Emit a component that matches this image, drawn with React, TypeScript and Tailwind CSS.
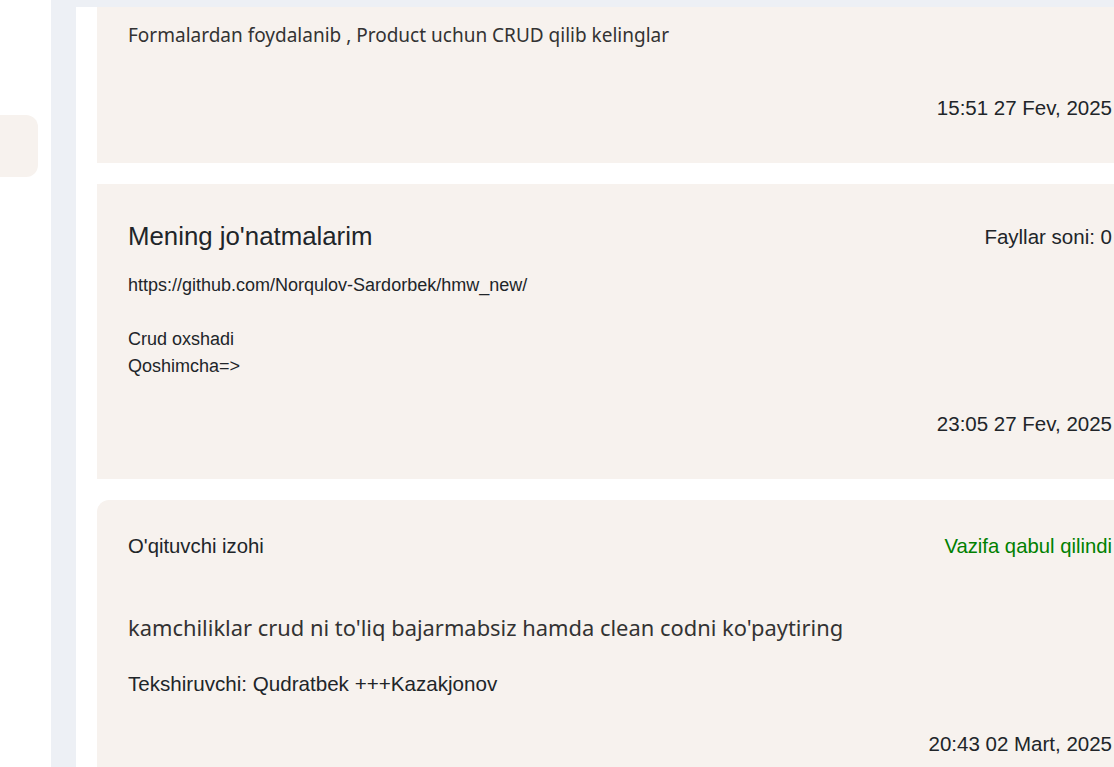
import React from 'react';

const ubuntuLike = { fontFamily: '"Noto Sans", "DejaVu Sans", sans-serif' };
const arial = { fontFamily: '"Liberation Sans", Arial, sans-serif' };

export default function App() {
  return (
    <div className="flex w-[1114px] h-[767px] overflow-hidden bg-white text-[#212529]" style={arial}>
      {/* sidebar (scrolled, only the active item edge shows) */}
      <aside className="w-[51px] shrink-0 bg-white pt-[115px]">
        <div className="w-[38px] h-[62px] rounded-r-xl bg-[#f7f2ee]" />
      </aside>

      {/* main area */}
      <div className="flex-1 shrink-0 bg-[#edf0f5] pl-[25px] pt-[7px]">
        <div className="w-[1067px] h-full bg-white pl-[21px] flex flex-col gap-[21px]">
          {/* task card */}
          <section className="bg-[#f7f2ee] pl-[31px] pr-[31px] pt-[16px] pb-[42px]">
            <p className="text-[19px] leading-[24px] text-[#333]" style={ubuntuLike}>
              Formalardan foydalanib , Product uchun CRUD qilib kelinglar
            </p>
            <div className="mt-[47px] text-right text-[20.5px] leading-[27px]">15:51 27 Fev, 2025</div>
          </section>

          {/* submission */}
          <section className="bg-[#f7f2ee] pl-[31px] pr-[31px] pt-[36px] pb-[42px]">
            <div className="flex items-center justify-between">
              <h2 className="text-[25.8px] leading-[32px]">Mening jo'natmalarim</h2>
              <span className="text-[20.5px] leading-[27px]">Fayllar soni: 0</span>
            </div>
            <p className="mt-[20px] text-[18px] leading-[27px] whitespace-pre-line">
              {'https://github.com/Norqulov-Sardorbek/hmw_new/\n\nCrud oxshadi\nQoshimcha=>'}
            </p>
            <div className="mt-[30px] text-right text-[20.5px] leading-[27px]">23:05 27 Fev, 2025</div>
          </section>

          {/* teacher comment */}
          <section className="bg-[#f7f2ee] rounded-tl-xl pl-[31px] pr-[31px] pt-[33px] pb-[40px]">
            <div className="flex items-center justify-between">
              <span className="text-[20.3px] leading-[27px]">O'qituvchi izohi</span>
              <span className="text-[20.3px] leading-[27px] text-[#008000]">Vazifa qabul qilindi</span>
            </div>
            <p className="mt-[53px] text-[21.9px] leading-[30px] text-[#333]" style={ubuntuLike}>
              kamchiliklar crud ni to'liq bajarmabsiz hamda clean codni ko'paytiring
            </p>
            <p className="mt-[27px] text-[20.6px] leading-[27px]">Tekshiruvchi: Qudratbek +++Kazakjonov</p>
            <div className="mt-[33px] text-right text-[20.5px] leading-[27px]">20:43 02 Mart, 2025</div>
          </section>
        </div>
      </div>
    </div>
  );
}
